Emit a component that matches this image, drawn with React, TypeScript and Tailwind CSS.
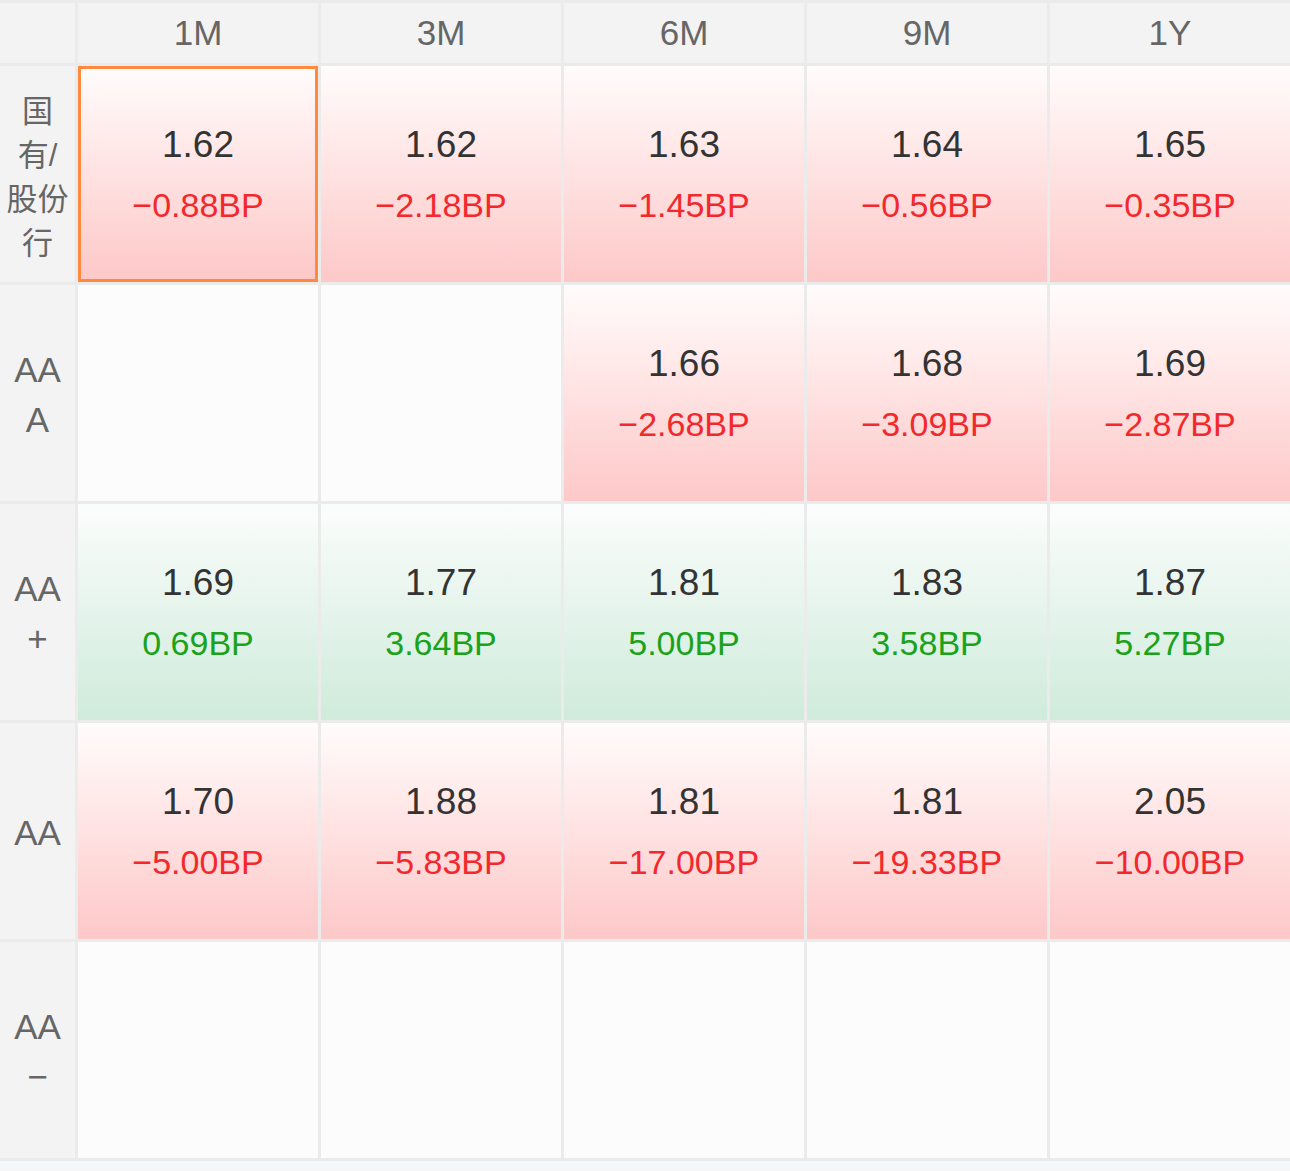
import React from "react";

type Cell = { v: string; bp: string; kind: "red" | "green" } | null;

const cols = ["1M", "3M", "6M", "9M", "1Y"];

const rows: { label: string[]; cjk?: boolean; cells: Cell[] }[] = [
  {
    label: ["国", "有/", "股份", "行"],
    cjk: true,
    cells: [
      { v: "1.62", bp: "−0.88BP", kind: "red" },
      { v: "1.62", bp: "−2.18BP", kind: "red" },
      { v: "1.63", bp: "−1.45BP", kind: "red" },
      { v: "1.64", bp: "−0.56BP", kind: "red" },
      { v: "1.65", bp: "−0.35BP", kind: "red" },
    ],
  },
  {
    label: ["AA", "A"],
    cells: [
      null,
      null,
      { v: "1.66", bp: "−2.68BP", kind: "red" },
      { v: "1.68", bp: "−3.09BP", kind: "red" },
      { v: "1.69", bp: "−2.87BP", kind: "red" },
    ],
  },
  {
    label: ["AA", "+"],
    cells: [
      { v: "1.69", bp: "0.69BP", kind: "green" },
      { v: "1.77", bp: "3.64BP", kind: "green" },
      { v: "1.81", bp: "5.00BP", kind: "green" },
      { v: "1.83", bp: "3.58BP", kind: "green" },
      { v: "1.87", bp: "5.27BP", kind: "green" },
    ],
  },
  {
    label: ["AA"],
    cells: [
      { v: "1.70", bp: "−5.00BP", kind: "red" },
      { v: "1.88", bp: "−5.83BP", kind: "red" },
      { v: "1.81", bp: "−17.00BP", kind: "red" },
      { v: "1.81", bp: "−19.33BP", kind: "red" },
      { v: "2.05", bp: "−10.00BP", kind: "red" },
    ],
  },
  {
    label: ["AA", "−"],
    cells: [null, null, null, null, null],
  },
];

export default function App() {
  return (
    <div
      className="w-[1290px] h-[1171px] bg-[#f5f6f8]"
      style={{ fontFamily: "'Liberation Sans', 'Noto Sans CJK SC', sans-serif" }}
    >
      <div className="grid grid-cols-[75px_repeat(5,240px)] grid-rows-[60px_repeat(5,216px)] gap-[3px] py-[3px] bg-[#ebebeb] h-[1161px]">
        <div className="bg-[#f3f3f3]" />
        {cols.map((c) => (
          <div
            key={c}
            className="bg-[#f3f3f3] flex items-center justify-center text-[35px] text-[#666666]"
          >
            {c}
          </div>
        ))}
        {rows.map((r, ri) => (
          <React.Fragment key={ri}>
            <div
              className={`bg-[#f3f3f3] flex flex-col items-center justify-center text-[#666666] ${
                r.cjk ? "pt-[8px]" : "pt-[4px]"
              }`}
            >
              {r.label.map((l, li) =>
                r.cjk ? (
                  <div key={li} className="text-[31px] leading-[44px]">
                    {l}
                  </div>
                ) : (
                  <div key={li} className="text-[35px] leading-[50px]">
                    {l}
                  </div>
                )
              )}
            </div>
            {r.cells.map((c, ci) => {
              if (!c) return <div key={ci} className="bg-[#fcfcfc]" />;
              const selected = ri === 0 && ci === 0;
              const bg =
                c.kind === "red"
                  ? "bg-gradient-to-b from-[#fffcfc] to-[#fdc8c8]"
                  : "bg-gradient-to-b from-[#fbfdfc] to-[#cfebdb]";
              return (
                <div
                  key={ci}
                  className={`${bg} flex flex-col items-center justify-center ${
                    selected ? "border-[3px] border-[#ff8a3d]" : ""
                  }`}
                >
                  <div className="text-[37px] leading-[44px] font-medium text-[#333333] mt-[2px]">
                    {c.v}
                  </div>
                  <div
                    className={`text-[34px] leading-[44px] mt-[16px] ${
                      c.kind === "red" ? "text-[#f3282d]" : "text-[#1aa21a]"
                    }`}
                  >
                    {c.bp}
                  </div>
                </div>
              );
            })}
          </React.Fragment>
        ))}
      </div>
    </div>
  );
}
